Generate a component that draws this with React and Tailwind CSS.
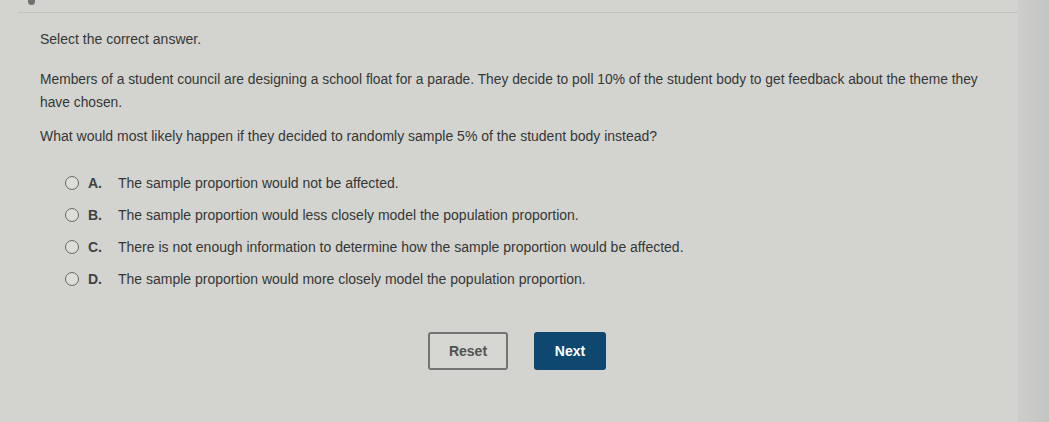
import React from "react";

const options = [
  { letter: "A.", text: "The sample proportion would not be affected." },
  { letter: "B.", text: "The sample proportion would less closely model the population proportion." },
  { letter: "C.", text: "There is not enough information to determine how the sample proportion would be affected." },
  { letter: "D.", text: "The sample proportion would more closely model the population proportion." },
];

function Option({ letter, text }) {
  return (
    <div className="flex items-center h-[32px]">
      <span className="w-[14px] h-[14px] rounded-full border-[1.5px] border-[#6a6c69] bg-[#dcddd8] ml-[25px]" />
      <span className="ml-[9px] w-[30px] font-bold text-[#404241]">{letter}</span>
      <span>{text}</span>
    </div>
  );
}

export default function App() {
  return (
    <div
      className="w-[1049px] h-[422px] overflow-hidden flex bg-[#d3d4cf] text-[#353736] text-[14px]"
      style={{ fontFamily: '"Liberation Sans", Arial, sans-serif' }}
    >
      <div className="w-[1018px] flex flex-col">
        <div className="h-[12px] flex">
          <div className="ml-[28px] w-[7px] h-[5px] rounded-b-sm bg-[#707270]" />
        </div>
        <div className="ml-[18px] w-[1000px] border-t border-[#bfc1bc]" />
        <div className="pl-[40px] pt-[16px]">
          <p className="leading-[20px]">Select the correct answer.</p>
          <p className="mt-[19px] leading-[23px] w-[950px] text-[13.8px]">
            Members of a student council are designing a school float for a parade. They decide to poll 10% of the student body to get feedback about the theme they have chosen.
          </p>
          <p className="mt-[11px] leading-[23px]">
            What would most likely happen if they decided to randomly sample 5% of the student body instead?
          </p>
          <div className="mt-[19px] flex flex-col">
            {options.map((o) => (
              <Option key={o.letter} {...o} />
            ))}
          </div>
          <div className="mt-[37px] flex gap-[26px] ml-[388px]">
            <button className="w-[80px] h-[38px] rounded-[3px] border-2 border-[#737573] font-bold text-[#515352] bg-[#d6d7d2]">
              Reset
            </button>
            <button className="w-[72px] h-[38px] rounded-[3px] bg-[#0e4870] font-bold text-white">
              Next
            </button>
          </div>
        </div>
      </div>
      <div className="flex-1 bg-gradient-to-r from-[#cdcecb] to-[#c4c5c2]" />
    </div>
  );
}
